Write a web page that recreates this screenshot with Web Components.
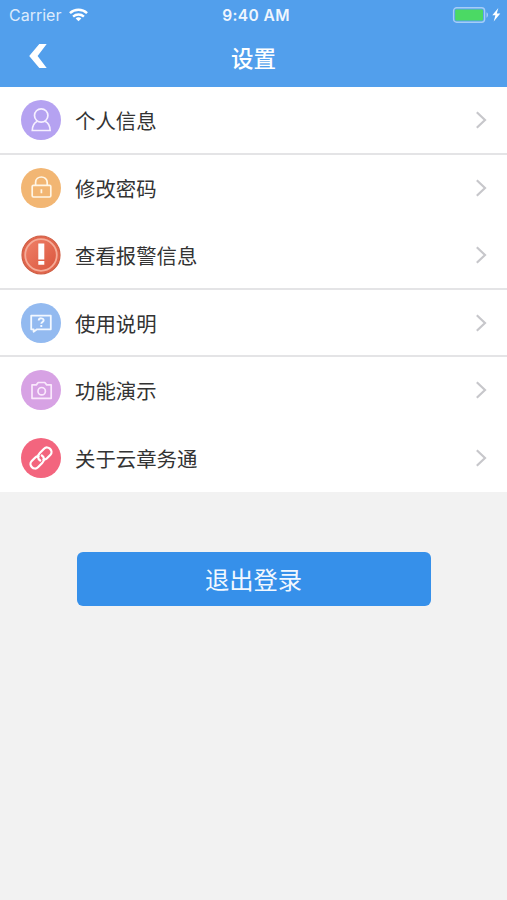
<!DOCTYPE html>
<html lang="zh-CN">
<head>
    <meta charset="UTF-8">
    <meta name="viewport" content="width=device-width, initial-scale=1.0">
    <title>设置</title>
    <style>
        body {
            margin: 0;
            background: #f2f2f2;
            color: #333;
            font-family: Inter, 'Noto Sans CJK SC', sans-serif;
        }
    </style>
</head>
<body>
    <settings-page></settings-page>

    <script>
        class StatusBar extends HTMLElement {
            connectedCallback() {
                this.attachShadow({ mode: 'open' });
                this.shadowRoot.innerHTML = `
                    <style>
                        :host {
                            display: grid;
                            grid-template-columns: 1fr auto 1fr;
                            align-items: center;
                            height: 30px;
                            padding: 0 6px 0 9px;
                            box-sizing: border-box;
                            color: #fff;
                            font-size: 16px;
                            line-height: 20px;
                        }

                        .carrier, .battery {
                            display: flex;
                            align-items: center;
                        }

                        .carrier {
                            gap: 8px;
                            color: #dcebfc;
                        }

                        .time {
                            padding: 1px 0 0 2px;
                            font-size: 15.5px;
                            font-weight: 600;
                            letter-spacing: 0.4px;
                            color: #eff6fe;
                        }

                        .battery {
                            justify-content: flex-end;
                        }

                        svg {
                            display: block;
                        }
                    </style>
                    <div class="carrier">
                        <span>Carrier</span>
                        <svg width="19" height="14" viewBox="0 0 20 14" fill="none" stroke="#fff" stroke-width="2.6">
                            <path d="M1 5.1C6 .4 14 .4 19 5.1"/>
                            <path d="M4.3 8.7c3.3-3 8.1-3 11.4 0"/>
                            <path d="M10 13.6l-3-3c1.6-1.5 4.4-1.5 6 0z" fill="#fff" stroke="none"/>
                        </svg>
                    </div>
                    <span class="time">9:40 AM</span>
                    <div class="battery">
                        <svg width="49" height="16" viewBox="0 0 49 16">
                            <rect x="1.6" y=".8" width="31" height="14.4" rx="3" fill="none" stroke="#a5cdf7" stroke-width="1.4"/>
                            <rect x="3.2" y="2.5" width="27.8" height="11" rx="1" fill="#4bd964"/>
                            <path d="M34.5 5.3c2 .8 2 4.6 0 5.4z" fill="#a5cdf7"/>
                            <path d="M46.3 1L40.3 8.2h3.1l-1.7 6.3 6.6-7.9h-3.5z" fill="#fff"/>
                        </svg>
                    </div>
                `;
            }
        }

        class NavHeader extends HTMLElement {
            connectedCallback() {
                this.attachShadow({ mode: 'open' });
                this.shadowRoot.innerHTML = `
                    <style>
                        :host {
                            display: grid;
                            grid-template-columns: 60px 1fr 60px;
                            align-items: center;
                            height: 57px;
                            padding-bottom: 5px;
                            box-sizing: border-box;
                            color: #fff;
                        }

                        button {
                            padding: 0 0 0 28px;
                            border: none;
                            background: none;
                        }

                        svg {
                            display: block;
                        }

                        h1 {
                            margin: 0;
                            padding-top: 5px;
                            font-size: 22.5px;
                            font-weight: 500;
                            line-height: 30px;
                            text-align: center;
                        }
                    </style>
                    <button aria-label="返回">
                        <svg width="20" height="26" viewBox="0 0 20 26">
                            <path d="M11.3 1H18.7L9.6 13 18.7 25H11.3L1.2 13z" fill="#fff"/>
                        </svg>
                    </button>
                    <h1><slot></slot></h1>
                `;
            }
        }

        const ICONS = {
            user: `
                <circle cx="20" cy="20" r="20" fill="#b5a2f1"/>
                <g fill="none" stroke="#f6f0ff" stroke-width="1.7">
                    <circle cx="20.2" cy="15.5" r="6.7"/>
                    <path d="M16.3 21.2c-3.3 1.6-5 4.6-5 9.3h17.8c0-4.7-1.7-7.7-5-9.3"/>
                </g>`,
            lock: `
                <circle cx="20" cy="20" r="20" fill="#f2b673"/>
                <g fill="none" stroke="#fff6e6" stroke-width="1.7">
                    <rect x="11.2" y="17.3" width="18.6" height="11.7" rx="1.3"/>
                    <path d="M14.6 17v-2.6c0-7.2 11.6-7.2 11.6 0V17M20.4 21.3v3.9"/>
                </g>`,
            alert: `
                <defs>
                    <linearGradient id="face" x1="0" y1="0" x2="1" y2="1">
                        <stop offset="0" stop-color="#f08168"/>
                        <stop offset="1" stop-color="#d9553d"/>
                    </linearGradient>
                </defs>
                <circle cx="20" cy="20" r="19" fill="#e1664d" stroke="#cf5f45" stroke-width="1.2"/>
                <circle cx="20" cy="20" r="15.8" fill="url(#face)" stroke="#f5ac98" stroke-width="1.8"/>
                <path d="M17.3 8.6h6v15.8h-6zM17.3 26h6v3.8h-6z" fill="#fff"/>`,
            help: `
                <circle cx="20" cy="20" r="20" fill="#93baf0"/>
                <path d="M10.2 12.7h19.6v13.6H16l-3.4 2.5v-2.5h-2.4z" fill="none" stroke="#f3f8ff" stroke-width="1.8" stroke-linejoin="round"/>
                <path d="M17.7 17.5c.2-3 5.2-2.8 4.9 0-.2 1.5-2.3 1.5-2.3 3.3M20.3 22.1v1.9" fill="none" stroke="#f3f8ff" stroke-width="1.9"/>`,
            camera: `
                <circle cx="20" cy="20" r="20" fill="#d7a2e4"/>
                <g fill="none" stroke="#fae9fc" stroke-width="1.7" stroke-linejoin="round">
                    <path d="M11 14.9h4.3l1.9-2.4h6.6l1.9 2.4h4.5v13.4H11z"/>
                    <circle cx="20.7" cy="21.2" r="3.7"/>
                </g>`,
            link: `
                <circle cx="20" cy="20" r="20" fill="#f3657e"/>
                <g transform="rotate(-45 20 20)" fill="none" stroke="#fff" stroke-width="2.2" stroke-linecap="round">
                    <path d="M19.4 17.2c-.8-1.1-1.8-1.6-3.1-1.6h-5c-5.6 0-5.6 8.8 0 8.8h6c3.9 0 5.7-2.7 5-5.6"/>
                    <path d="M20.6 22.8c.8 1.1 1.8 1.6 3.1 1.6h5c5.6 0 5.6-8.8 0-8.8h-6c-3.9 0-5.7 2.7-5 5.6"/>
                </g>`
        };

        class SettingsRow extends HTMLElement {
            connectedCallback() {
                this.attachShadow({ mode: 'open' });
                this.shadowRoot.innerHTML = `
                    <style>
                        :host {
                            display: flex;
                            align-items: center;
                            height: 67.5px;
                            padding: 0 20px 1px 21px;
                            box-sizing: border-box;
                            background: #fff;
                        }

                        :host([divider]) {
                            box-shadow: inset 0 -2px #e4e4e6;
                        }

                        svg {
                            display: block;
                            flex: none;
                        }

                        .label {
                            flex: 1;
                            margin-left: 14px;
                            padding-top: 4px;
                            font-size: 20.4px;
                            line-height: 30px;
                        }
                    </style>
                    <svg width="40" height="40" viewBox="0 0 40 40">${ICONS[this.getAttribute('icon')]}</svg>
                    <span class="label"><slot></slot></span>
                    <svg width="12" height="18" viewBox="0 0 12 18" fill="none" stroke="#c7c7cb" stroke-width="2.2">
                        <path d="M1.8 1.2L10 9l-8.2 7.8"/>
                    </svg>
                `;
            }
        }

        class PrimaryButton extends HTMLElement {
            connectedCallback() {
                this.attachShadow({ mode: 'open' });
                this.shadowRoot.innerHTML = `
                    <style>
                        :host {
                            display: block;
                        }

                        button {
                            display: block;
                            width: 100%;
                            height: 54px;
                            padding: 0 1px 2px 0;
                            border: none;
                            border-radius: 6px;
                            background: #3690ea;
                            color: #f2f8ff;
                            font: inherit;
                            font-size: 24.3px;
                        }
                    </style>
                    <button><slot></slot></button>
                `;
            }
        }

        class SettingsPage extends HTMLElement {
            connectedCallback() {
                this.attachShadow({ mode: 'open' });
                this.shadowRoot.innerHTML = `
                    <style>
                        :host {
                            display: flex;
                            flex-direction: column;
                            min-height: 100vh;
                        }

                        header {
                            background: #529fec;
                        }

                        primary-button {
                            margin: 60px 76px 0 77px;
                        }
                    </style>
                    <header>
                        <status-bar></status-bar>
                        <nav-header>设置</nav-header>
                    </header>
                    <main>
                        <settings-row icon="user" divider>个人信息</settings-row>
                        <settings-row icon="lock">修改密码</settings-row>
                        <settings-row icon="alert" divider>查看报警信息</settings-row>
                        <settings-row icon="help" divider>使用说明</settings-row>
                        <settings-row icon="camera">功能演示</settings-row>
                        <settings-row icon="link">关于云章务通</settings-row>
                    </main>
                    <primary-button>退出登录</primary-button>
                `;
            }
        }

        customElements.define('status-bar', StatusBar);
        customElements.define('nav-header', NavHeader);
        customElements.define('settings-row', SettingsRow);
        customElements.define('primary-button', PrimaryButton);
        customElements.define('settings-page', SettingsPage);
    </script>
</body>
</html>
